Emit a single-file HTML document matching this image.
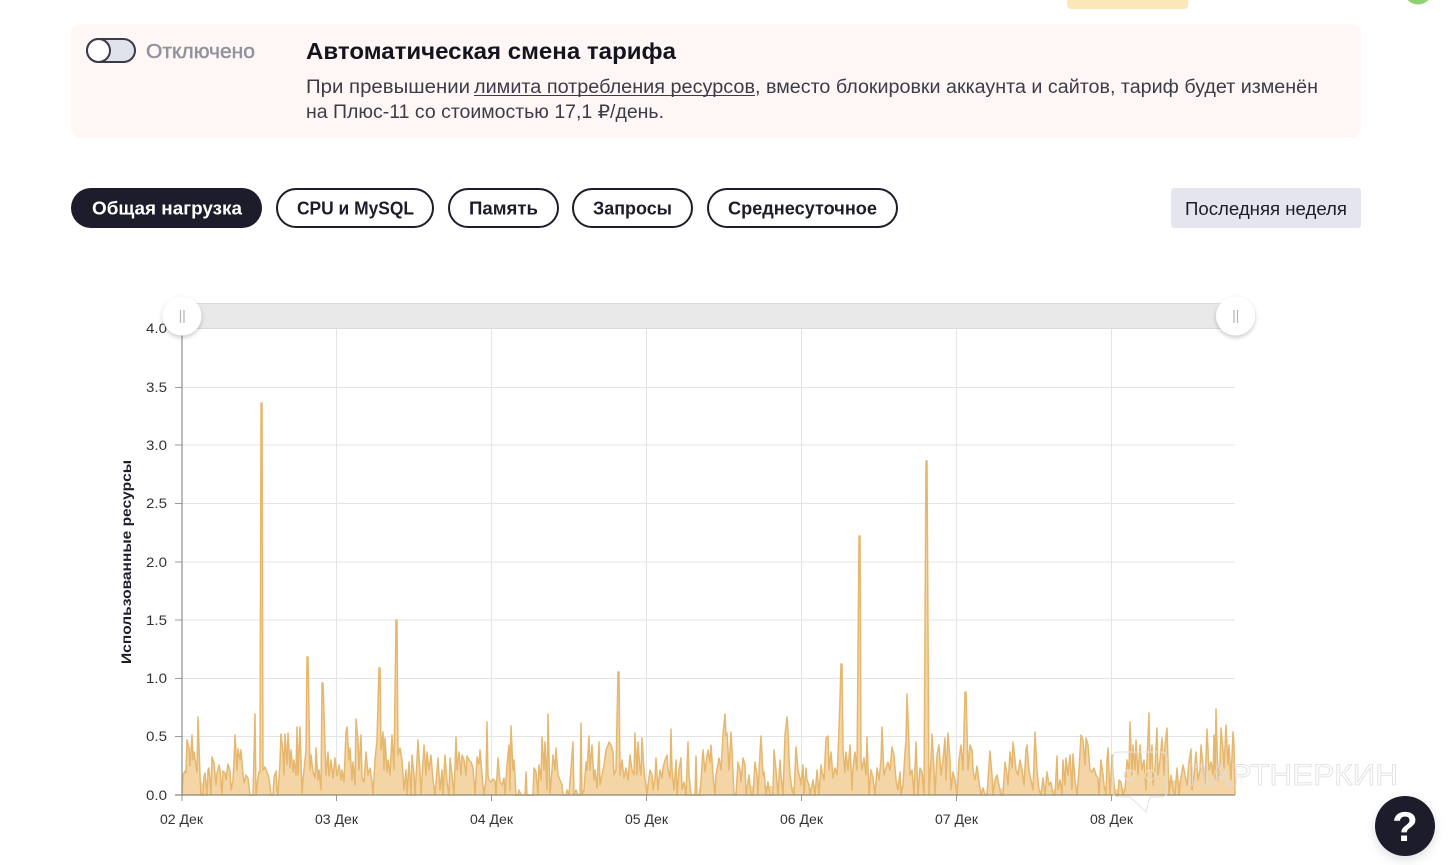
<!DOCTYPE html>
<html lang="ru">
<head>
<meta charset="utf-8">
<title>Автоматическая смена тарифа</title>
<style>
html,body{margin:0;padding:0;background:#fff;width:1449px;height:865px;overflow:hidden}
svg{display:block}
text{font-family:"Liberation Sans","DejaVu Sans",sans-serif}
.p{font-size:18px;font-weight:700;fill:#1c1c2a}
.a{font-size:14px;fill:#333}
.b{font-size:19px;fill:#3c3c48}
</style>
</head>
<body>
<svg width="1449" height="865" viewBox="0 0 1449 865" xmlns="http://www.w3.org/2000/svg">
<defs>
<filter id="s" x="-40%" y="-40%" width="180%" height="180%"><feDropShadow dx="0" dy="2" stdDeviation="2" flood-color="#000" flood-opacity=".22"/></filter>
<filter id="h" x="-40%" y="-40%" width="180%" height="180%"><feDropShadow dx="0" dy="4" stdDeviation="5" flood-color="#000" flood-opacity=".12"/></filter>
</defs>
<rect x="1067" y="-6" width="121" height="15" rx="4" fill="#fbe8b6"/>
<circle cx="1418" cy="-10" r="14.500" fill="#8fd272"/>

<rect x="71" y="24" width="1290" height="114" rx="10" fill="#fff7f5"/>
<rect x="87" y="39" width="48" height="23" rx="11.5" fill="#e0e2ec" stroke="#3a3a48" stroke-width="2"/>
<circle cx="98.500" cy="50.500" r="11.500" fill="#fff" stroke="#3a3a48" stroke-width="2"/>
<text x="146" y="58" font-size="20" font-weight="400" fill="#92929f" stroke="#92929f" stroke-width=".5" textLength="109" lengthAdjust="spacingAndGlyphs">Отключено</text>
<text x="306" y="59" font-size="23" font-weight="700" fill="#14141f" textLength="370" lengthAdjust="spacingAndGlyphs">Автоматическая смена тарифа</text>
<text class="b" x="306" y="93" textLength="164" lengthAdjust="spacingAndGlyphs">При превышении</text>
<text class="b" x="474" y="93" textLength="281" lengthAdjust="spacingAndGlyphs">лимита потребления ресурсов</text>
<rect x="474" y="95" width="281" height="1" fill="#3c3c48"/>
<text class="b" x="755" y="93" textLength="563" lengthAdjust="spacingAndGlyphs">, вместо блокировки аккаунта и сайтов, тариф будет изменён</text>
<text class="b" x="306" y="118" textLength="358" lengthAdjust="spacingAndGlyphs">на Плюс-11 со стоимостью 17,1 ₽/день.</text>

<rect x="71" y="188" width="191" height="40" rx="20" fill="#1c1c2a"/>
<text class="p" x="92" y="214.500" style="fill:#fff" textLength="150" lengthAdjust="spacingAndGlyphs">Общая нагрузка</text>
<rect x="277" y="189" width="156" height="38" rx="19" fill="#fff" stroke="#1c1c2a" stroke-width="2"/>
<text class="p" x="297" y="214.500" textLength="117" lengthAdjust="spacingAndGlyphs">CPU и MySQL</text>
<rect x="449" y="189" width="109" height="38" rx="19" fill="#fff" stroke="#1c1c2a" stroke-width="2"/>
<text class="p" x="469" y="214.500" textLength="69" lengthAdjust="spacingAndGlyphs">Память</text>
<rect x="573" y="189" width="119" height="38" rx="19" fill="#fff" stroke="#1c1c2a" stroke-width="2"/>
<text class="p" x="593" y="214.500" textLength="79" lengthAdjust="spacingAndGlyphs">Запросы</text>
<rect x="708" y="189" width="189" height="38" rx="19" fill="#fff" stroke="#1c1c2a" stroke-width="2"/>
<text class="p" x="728" y="214.500" textLength="149" lengthAdjust="spacingAndGlyphs">Среднесуточное</text>
<rect x="1171" y="188" width="190" height="40" rx="3" fill="#e4e5ee"/>
<text x="1185" y="215" font-size="18.500" fill="#1c1c2a" textLength="162" lengthAdjust="spacingAndGlyphs">Последняя неделя</text>

<!-- grid -->
<g stroke="#e4e4e4" stroke-width="1" fill="none">
<path d="M182 387.500H1235M182 445H1235M182 503.500H1235M182 562H1235M182 620H1235M182 678.500H1235M182 736.500H1235"/>
<path d="M336.500 329V795M491.500 329V795M646.500 329V795M801.500 329V795M956.500 329V795M1111.500 329V795"/>
</g>
<path d="M175 387.500H182M175 445H182M175 503.500H182M175 562H182M175 620H182M175 678.500H182M175 736.500H182M175 795H182M182 795V801M336.500 795V801M491.500 795V801M646.500 795V801M801.500 795V801M956.500 795V801M1111.500 795V801" stroke="#999" stroke-width="1" fill="none"/>

<!-- data -->
<polygon fill="#f4d5a6" points="182,795 182,782 248,784 250,795 254,795 256,782 270,784 272,795 276,795 278,784 300,784 304,778 340,780 372,784 374,795 376,780 410,784 412,795 416,784 440,786 444,795 448,786 470,782 476,795 480,786 510,786 516,795 534,795 536,782 560,784 564,795 582,795 584,786 600,778 660,786 676,786 678,795 698,795 700,784 732,784 734,795 738,786 772,786 776,795 780,786 812,788 816,784 900,786 920,786 960,784 985,795 988,788 1040,790 1043,795 1050,790 1100,786 1120,790 1135,782 1235,778 1235,795"/>
<polyline fill="#f4d5a6" stroke="#e6b86f" stroke-width="1.500" stroke-linejoin="round" points="182,795 183,775 185,771 186,773 187,740 189,748 190,766 192,735 193,760 194,752 196,766 197,772 198,717 200,775 201,795 203,795 204,776 205,773 207,795 208,770 209,768 211,795 212,757 214,763 216,785 217,773 219,765 220,770 222,795 223,771 225,773 226,780 228,764 230,771 231,790 233,780 234,762 235,735 237,770 238,749 240,760 241,750 243,775 244,783 246,775 248,778 250,795 253,795 255,714 256,795 258,778 259,772 260,772 261,403 262,403 263,770 265,767 267,772 269,778 271,795 273,795 274,778 276,771 277,790 278,795 280,762 281,734 283,752 284,775 285,734 287,765 288,733 290,768 291,750 293,772 294,760 296,775 297,727 298,775 300,727 302,795 303,780 304,770 306,750 307,657 308,657 310,770 311,755 313,772 315,778 316,748 318,780 319,770 321,790 322,683 323,683 325,745 326,775 328,752 329,776 331,760 333,778 335,758 337,776 339,765 341,780 342,770 344,782 346,732 347,727 349,760 350,748 352,780 353,762 355,785 356,719 358,740 359,770 361,735 362,778 364,782 366,752 368,775 370,768 372,782 373,795 375,760 377,740 379,668 380,668 381,750 383,732 384,770 385,738 387,772 388,760 390,775 392,735 394,770 396,620 397,620 398,755 400,748 402,760 404,790 406,770 407,795 409,762 411,795 412,755 414,775 415,795 417,760 418,740 420,772 421,795 423,762 424,745 426,775 427,752 429,770 431,755 433,780 435,795 437,770 438,758 440,790 442,770 443,795 445,755 447,782 449,795 450,758 452,775 454,795 456,737 457,770 459,752 461,775 462,755 464,760 466,775 467,756 469,760 471,762 473,768 475,795 477,757 479,764 480,750 482,775 484,795 486,780 487,722 488,775 489,780 491,782 493,779 495,781 496,795 498,758 500,782 502,785 504,778 505,795 507,765 509,745 510,790 511,726 513,770 514,760 516,795 518,795 519,790 521,795 525,795 526,772 527,795 533,795 534,768 536,772 538,795 539,765 541,780 542,737 544,770 545,742 547,790 548,714 550,795 552,770 553,755 555,770 556,748 558,775 560,780 562,785 563,795 566,795 567,790 569,795 573,742 574,795 576,790 578,795 580,795 581,723 582,795 584,790 586,762 587,770 589,736 590,770 592,745 594,780 595,770 597,788 599,742 600,785 602,775 604,765 606,750 608,745 609,742 611,745 613,752 614,775 616,770 618,672 619,672 620,775 622,760 624,778 626,768 628,780 630,755 632,770 634,775 635,733 637,775 638,742 640,770 641,775 642,738 644,770 645,780 647,795 648,785 650,770 652,775 653,790 655,778 656,758 658,790 660,770 662,778 663,768 665,760 667,755 668,770 670,778 671,729 672,770 674,790 676,760 677,795 679,770 681,758 682,790 684,782 686,795 688,742 689,775 691,795 693,795 695,795 696,756 697,795 700,795 703,750 705,772 707,756 708,750 710,762 711,745 713,775 715,795 716,775 719,758 721,770 723,735 725,714 726,736 727,733 728,750 729,770 731,732 732,750 734,795 736,795 738,762 740,770 741,782 743,758 745,765 746,795 749,775 751,795 753,795 755,762 757,775 758,795 760,752 761,736 763,775 764,772 766,795 768,782 770,795 773,795 774,750 776,770 778,795 780,760 781,775 783,795 785,735 787,717 788,730 789,757 790,775 792,790 794,795 796,747 798,770 800,778 801,785 803,765 804,795 806,768 807,780 809,785 810,795 813,780 815,795 817,770 819,795 821,765 822,772 824,780 826,738 828,736 829,770 831,752 833,778 835,768 837,775 838,755 840,700 841,664 842,664 843,750 845,772 846,752 848,770 850,745 852,790 853,768 855,752 857,770 859,536 860,536 861,760 862,770 864,758 866,775 867,737 869,795 871,770 873,778 875,795 877,768 879,780 881,760 882,727 884,775 886,768 888,762 890,770 892,747 894,755 896,780 898,790 900,772 901,795 903,785 905,752 906,740 907,694 909,745 910,775 912,770 914,795 916,742 918,795 920,768 922,772 924,795 926,461 927,461 929,795 931,760 932,734 934,770 935,795 937,755 939,745 941,775 943,760 945,738 946,780 948,733 950,760 951,790 953,772 955,780 957,795 959,760 961,745 963,770 965,692 966,692 968,770 970,745 972,750 973,770 975,780 977,766 979,782 981,795 983,788 985,795 987,795 989,765 990,751 992,775 993,795 995,780 997,775 999,785 1001,795 1003,795 1005,762 1007,775 1008,785 1010,752 1012,768 1013,742 1015,760 1016,770 1018,775 1020,760 1022,770 1024,785 1026,750 1027,745 1029,770 1031,780 1033,790 1035,732 1037,770 1039,790 1041,795 1043,778 1045,795 1047,772 1049,785 1051,782 1053,795 1055,795 1057,756 1058,790 1060,780 1062,795 1063,760 1065,785 1066,758 1068,775 1070,755 1072,790 1073,754 1075,780 1077,795 1079,770 1081,735 1083,740 1085,765 1086,738 1088,745 1090,770 1092,772 1094,768 1096,775 1098,778 1099,795 1101,760 1103,775 1104,785 1106,795 1107,760 1108,748 1110,795 1112,755 1114,785 1115,795 1118,795 1119,780 1121,782 1123,795 1125,790 1127,760 1129,770 1130,722 1132,775 1133,745 1135,770 1136,740 1138,775 1140,745 1142,770 1144,760 1146,790 1147,760 1149,713 1150,770 1152,745 1153,785 1155,768 1157,728 1158,775 1160,760 1162,738 1164,775 1165,745 1167,728 1169,795 1171,775 1173,790 1175,795 1177,768 1179,795 1181,778 1183,765 1185,775 1187,785 1189,762 1191,749 1192,790 1194,775 1196,752 1198,780 1200,770 1201,745 1203,765 1205,785 1207,729 1209,770 1211,762 1213,775 1214,735 1215,780 1216,709 1218,780 1220,762 1221,728 1223,750 1224,770 1226,725 1228,765 1229,745 1231,780 1233,732 1234,745 1235,795"/>
<path d="M182 329V795" stroke="#8f8f8f" stroke-width="1.200"/>
<path d="M175 795H1235" stroke="#8f8779" stroke-width="1.300"/>

<!-- slider -->
<rect x="182" y="303.500" width="1053" height="25" fill="#e9e9e9" stroke="#dcdcdc" stroke-width="1"/>

<!-- axis labels -->
<g class="labels">
<text class="a" x="146" y="333" textLength="21" lengthAdjust="spacingAndGlyphs">4.0</text>
<text class="a" x="146" y="392" textLength="21" lengthAdjust="spacingAndGlyphs">3.5</text>
<text class="a" x="146" y="450" textLength="21" lengthAdjust="spacingAndGlyphs">3.0</text>
<text class="a" x="146" y="508" textLength="21" lengthAdjust="spacingAndGlyphs">2.5</text>
<text class="a" x="146" y="567" textLength="21" lengthAdjust="spacingAndGlyphs">2.0</text>
<text class="a" x="146" y="625" textLength="21" lengthAdjust="spacingAndGlyphs">1.5</text>
<text class="a" x="146" y="683" textLength="21" lengthAdjust="spacingAndGlyphs">1.0</text>
<text class="a" x="146" y="741" textLength="21" lengthAdjust="spacingAndGlyphs">0.5</text>
<text class="a" x="146" y="800" textLength="21" lengthAdjust="spacingAndGlyphs">0.0</text>
<text class="a" x="160" y="824" textLength="43" lengthAdjust="spacingAndGlyphs">02 Дек</text>
<text class="a" x="315" y="824" textLength="43" lengthAdjust="spacingAndGlyphs">03 Дек</text>
<text class="a" x="470" y="824" textLength="43" lengthAdjust="spacingAndGlyphs">04 Дек</text>
<text class="a" x="625" y="824" textLength="43" lengthAdjust="spacingAndGlyphs">05 Дек</text>
<text class="a" x="780" y="824" textLength="43" lengthAdjust="spacingAndGlyphs">06 Дек</text>
<text class="a" x="935" y="824" textLength="43" lengthAdjust="spacingAndGlyphs">07 Дек</text>
<text class="a" x="1090" y="824" textLength="43" lengthAdjust="spacingAndGlyphs">08 Дек</text>
</g>
<text transform="translate(131,664) rotate(-90)" font-size="14" font-weight="700" fill="#1c1c2a" textLength="204" lengthAdjust="spacingAndGlyphs">Использованные ресурсы</text>

<!-- slider handles -->
<circle cx="182" cy="316" r="19.500" fill="#fff" filter="url(#s)"/>
<path d="M180.500 310V323M184 310V323" stroke="#b5b5b5" stroke-width="1.200"/>
<circle cx="1235.500" cy="316" r="19.500" fill="#fff" filter="url(#s)"/>
<path d="M1234 310V323M1237.500 310V323" stroke="#b5b5b5" stroke-width="1.200"/>

<!-- watermark -->
<path d="M1119 752H1161Q1167 752 1167 758V791Q1167 797 1161 797H1150L1146 812L1130 797H1119Q1113 797 1113 791V758Q1113 752 1119 752Z" fill="none" stroke="#e2e2e2" stroke-width="1"/>
<path d="M1124 775a5 5 0 1 0 10 0a5 5 0 1 0 -10 0M1145 775a5 5 0 1 0 10 0a5 5 0 1 0 -10 0" fill="none" stroke="#e2e2e2" stroke-width="1"/>
<text x="1187" y="785" font-size="30" fill="none" stroke="#dedede" stroke-width=".8" textLength="211" lengthAdjust="spacingAndGlyphs">ПАРТНЕРКИН</text>

<!-- help -->
<circle cx="1405" cy="826" r="30" fill="#1c1c2a" filter="url(#h)"/>
<text x="1405" y="841" font-size="42" font-weight="700" fill="#fff" text-anchor="middle">?</text>
</svg>
</body>
</html>
